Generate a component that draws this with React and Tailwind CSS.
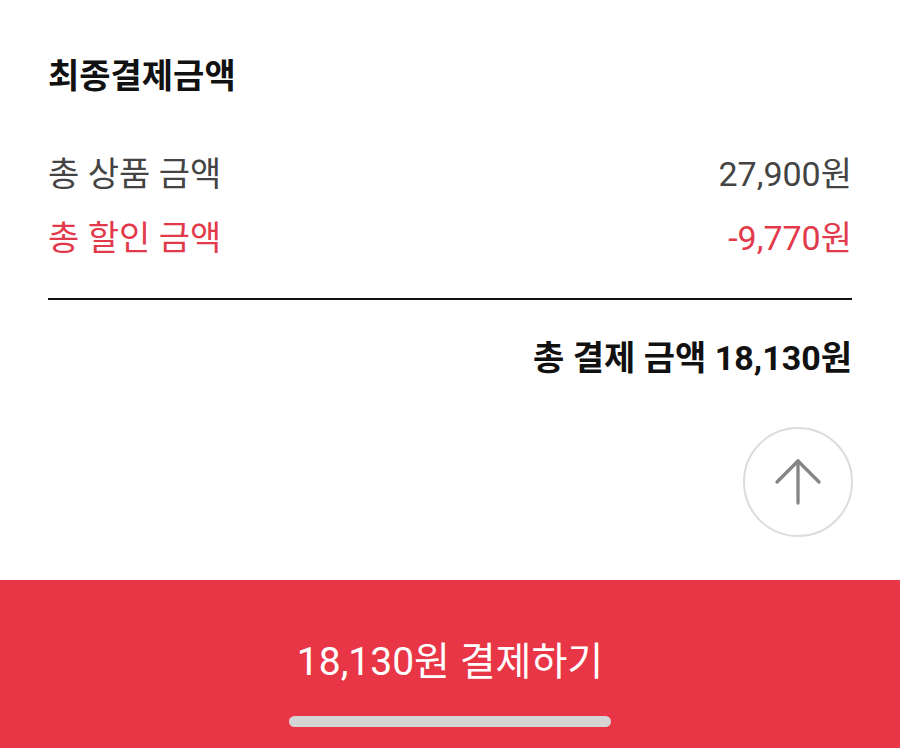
import React from 'react'
import { ArrowUp } from 'lucide-react'

const font = { fontFamily: "Roboto, 'Noto Sans CJK KR', sans-serif" }

const App = () => {
  return (
    <div className="w-[900px] h-[748px] bg-white flex flex-col overflow-hidden" style={font}>
      <div className="flex-1 flex flex-col px-12">
        <h2 className="mt-[52px] text-[34px] leading-[48px] font-bold text-[#111]">최종결제금액</h2>

        <div className="mt-[50px] flex justify-between text-[34px] leading-[48px] text-[#444]">
          <span>총 상품 금액</span>
          <span>27,900원</span>
        </div>
        <div className="mt-[16px] flex justify-between text-[34px] leading-[48px] text-[#e23a4b]">
          <span>총 할인 금액</span>
          <span>-9,770원</span>
        </div>

        <div className="mt-[36px] h-[2px] bg-[#111]" />

        <div className="mt-[34px] flex justify-end text-[34px] leading-[48px] font-bold text-[#111]">
          총 결제 금액 18,130원
        </div>

        <div className="mt-[45px] flex justify-end -mr-[1px]">
          <button className="w-[110px] h-[110px] rounded-full border-2 border-[#dcdcdc] bg-white flex items-center justify-center">
            <ArrowUp size={72} strokeWidth={1.1} color="#858585" />
          </button>
        </div>
      </div>

      <div className="h-[168px] bg-[#e93646] flex flex-col items-center">
        <div className="mt-[58px] text-[39px] leading-[48px] font-normal text-white">18,130원 결제하기</div>
        <div className="mt-[30px] w-[322px] h-[11px] rounded-full bg-[#d5d5d5]" />
      </div>
    </div>
  )
}

export default App
